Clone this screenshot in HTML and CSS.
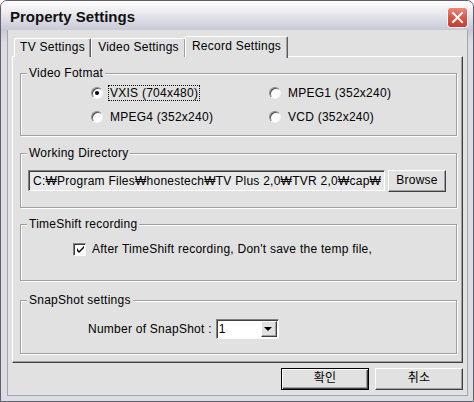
FILE: index.html
```html
<!DOCTYPE html>
<html lang="ko">
<head>
    <meta charset="UTF-8">
    <title>Property Settings</title>
    <link rel="stylesheet" href="styles.css">
</head>
<body>
    <div class="window">
        <!-- Title bar -->
        <div class="titlebar">
            <span class="title">Property Settings</span>
            <div class="close">
                <svg width="21" height="21" viewBox="0 0 21 21">
                    <defs>
                        <linearGradient id="red" x1="0" y1="0" x2="0" y2="1">
                            <stop offset="0" stop-color="#ee8a78"/>
                            <stop offset="0.5" stop-color="#d9574a"/>
                            <stop offset="1" stop-color="#c53b2e"/>
                        </linearGradient>
                    </defs>
                    <rect x="0.5" y="0.5" width="20" height="20" rx="3" fill="url(#red)" stroke="#ffffff"/>
                    <path d="M6 6 L15 15 M15 6 L6 15" stroke="#ffffff" stroke-width="2" stroke-linecap="square"/>
                </svg>
            </div>
        </div>

        <div class="frame">
            <div class="client">
                <!-- Tabs -->
                <div class="tabs">
                    <div class="tab tab-tv">TV Settings</div>
                    <div class="tab tab-video">Video Settings</div>
                    <div class="tab tab-record active">Record Settings</div>
                </div>

                <div class="panel">
                    <fieldset class="group group-video">
                        <legend>Video Fotmat</legend>
                        <div class="radio-grid">
                            <label class="option"><span class="radio checked"></span><span class="focus">VXIS (704x480)</span></label>
                            <label class="option"><span class="radio"></span><span class="text">MPEG1 (352x240)</span></label>
                            <label class="option"><span class="radio"></span><span class="text">MPEG4 (352x240)</span></label>
                            <label class="option"><span class="radio"></span><span class="text">VCD (352x240)</span></label>
                        </div>
                    </fieldset>

                    <fieldset class="group group-dir">
                        <legend>Working Directory</legend>
                        <div class="dir-row">
                            <div class="field">C:₩Program Files₩honestech₩TV Plus 2,0₩TVR 2,0₩cap₩</div>
                            <div class="btn btn-browse">Browse</div>
                        </div>
                    </fieldset>

                    <fieldset class="group group-shift">
                        <legend>TimeShift recording</legend>
                        <label class="check-row">
                            <span class="checkbox">
                                <svg width="7" height="7" viewBox="0 0 7 7">
                                    <path d="M0 2 L0 5 L2 7 L7 2 L7 0 L2 5 Z" fill="#000"/>
                                </svg>
                            </span>
                            <span>After TimeShift recording, Don't save the temp file,</span>
                        </label>
                    </fieldset>

                    <fieldset class="group group-snap">
                        <legend>SnapShot settings</legend>
                        <div class="snap-row">
                            <span>Number of SnapShot :</span>
                            <div class="select">
                                <span class="select-value">1</span>
                                <span class="select-arrow"></span>
                            </div>
                        </div>
                    </fieldset>
                </div>

                <!-- Dialog buttons -->
                <div class="buttons">
                    <div class="btn btn-default">확인</div>
                    <div class="btn">취소</div>
                </div>
            </div>
        </div>
    </div>
</body>
</html>
```

FILE: styles.css
```css
/* Reset */
* {
    margin: 0;
    padding: 0;
    box-sizing: border-box;
}

body {
    font-family: "Liberation Sans", "Noto Sans CJK KR", sans-serif;
    font-size: 12px;
    letter-spacing: 0.25px;
    color: #000;
    background: #ffffff;
}

/* Window frame */
.window {
    width: 474px;
    height: 402px;
    border: 1px solid #5f5f6b;
    border-radius: 7px 7px 0 0;
    overflow: hidden;
    background: #d8d8e0;
    display: flex;
    flex-direction: column;
}

.titlebar {
    height: 29px;
    display: flex;
    align-items: center;
    justify-content: space-between;
    padding: 0 5px 0 9px;
    background: linear-gradient(to bottom, #ffffff 0%, #ededf2 35%, #c8c9d5 100%);
}

.title {
    font-size: 15px;
    font-weight: bold;
    letter-spacing: 0;
    color: #111;
    margin-top: 1px;
}

.close {
    width: 21px;
    height: 21px;
    margin-top: 4px;
}

.close svg {
    display: block;
}

.frame {
    flex: 1;
    padding: 0 5px 5px 6px;
    background: linear-gradient(to bottom, #c8c9d5 0px, #dcdce3 12px);
}

.client {
    height: 100%;
    background: #e1e1e1;
    border: 1px solid #a5a5b0;
    border-top: none;
    padding: 6px 4px 5px 4px;
}

/* Tabs */
.tabs {
    display: flex;
    height: 21px;
    padding-left: 2px;
    position: relative;
    z-index: 1;
}

.tab {
    height: 19px;
    margin-top: 2px;
    border-top: 1px solid #ffffff;
    border-left: 1px solid #ffffff;
    border-right: 1px solid #5a5a5a;
    border-radius: 2px 2px 0 0;
    background: #e1e1e1;
    text-align: center;
    line-height: 17px;
    box-shadow: inset -1px 0 0 #a0a0a0;
}

.tab-tv {
    width: 77px;
}

.tab-video {
    width: 95px;
}

.tab-record {
    width: 103px;
}

.tab.active {
    height: 22px;
    margin-top: 0;
    margin-left: -1px;
    line-height: 18px;
}

/* Tab page */
.panel {
    height: 307px;
    margin-top: -1px;
    border: 1px solid;
    border-color: #ffffff #404040 #404040 #ffffff;
    box-shadow: inset -1px -1px 0 #a0a0a0;
    padding-top: 9px;
}

/* Group boxes */
.group {
    margin: 0 5px 0 7px;
    border: 1px solid #a0a0a0;
    box-shadow: inset 1px 1px 0 #ffffff, 1px 1px 0 #ffffff;
}

.group legend {
    margin-left: 6px;
    padding: 0 2px;
    line-height: 14px;
    background: #e1e1e1;
}

.group-dir {
    margin-top: 10px;
}

.group-shift {
    margin-top: 9px;
}

.group-snap {
    margin-top: 12px;
}

/* Video format radios */
.radio-grid {
    display: grid;
    grid-template-columns: 178px 1fr;
    grid-auto-rows: 24px;
    padding: 1px 0 6px 70px;
}

.option {
    display: flex;
    align-items: center;
}

.radio {
    width: 12px;
    height: 12px;
    border-radius: 50%;
    background: #ffffff;
    border: 1px solid;
    border-color: #8a8a8a #f2f2f2 #f2f2f2 #8a8a8a;
    box-shadow: inset 1px 1px 0 #505050;
    margin-right: 7px;
    display: flex;
    align-items: center;
    justify-content: center;
}

.radio.checked::after {
    content: "";
    width: 4px;
    height: 4px;
    border-radius: 50%;
    background: #000;
}

.focus {
    border: 1px dotted #000;
    padding: 0 1px;
    margin-left: -2px;
    line-height: 14px;
}

/* Working directory */
.dir-row {
    display: flex;
    align-items: flex-start;
    padding: 10px 0 15px 7px;
}

.field {
    width: 357px;
    height: 21px;
    border: 1px solid;
    border-color: #808080 #ffffff #ffffff #808080;
    box-shadow: inset 1px 1px 0 #404040;
    background: #e9e9e9;
    padding: 2px 0 0 4px;
    white-space: nowrap;
    overflow: hidden;
    line-height: 16px;
}

.btn {
    height: 22px;
    border: 1px solid;
    border-color: #ffffff #404040 #404040 #ffffff;
    box-shadow: inset -1px -1px 0 #a0a0a0;
    background: #e1e1e1;
    text-align: center;
    line-height: 19px;
}

.btn-browse {
    width: 58px;
    margin-left: 3px;
}

/* TimeShift */
.check-row {
    display: flex;
    align-items: center;
    height: 16px;
    margin: 10px 0 23px 52px;
}

.checkbox {
    width: 13px;
    height: 13px;
    background: #ffffff;
    border: 1px solid;
    border-color: #808080 #ffffff #ffffff #808080;
    box-shadow: inset 1px 1px 0 #404040;
    margin-right: 6px;
    display: flex;
    align-items: center;
    justify-content: center;
}

.checkbox svg {
    display: block;
    margin: 1px 0 0 1px;
}

/* SnapShot */
.snap-row {
    display: flex;
    align-items: center;
    padding: 12px 0 14px 67px;
}

.select {
    width: 63px;
    height: 20px;
    margin-left: 4px;
    border: 1px solid;
    border-color: #808080 #ffffff #ffffff #808080;
    box-shadow: inset 1px 1px 0 #404040;
    background: #ffffff;
    display: flex;
    align-items: center;
    padding: 1px 1px 1px 2px;
}

.select-value {
    flex: 1;
    line-height: 16px;
}

.select-arrow {
    width: 16px;
    height: 16px;
    border: 1px solid;
    border-color: #ffffff #404040 #404040 #ffffff;
    box-shadow: inset -1px -1px 0 #a0a0a0;
    background: #e1e1e1;
    display: flex;
    align-items: center;
    justify-content: center;
}

.select-arrow::after {
    content: "";
    border-left: 4px solid transparent;
    border-right: 4px solid transparent;
    border-top: 4px solid #000;
    margin: 0 1px 0 0;
}

/* Bottom buttons */
.buttons {
    display: flex;
    justify-content: flex-end;
    gap: 6px;
    margin-top: 5px;
}

.buttons .btn {
    width: 88px;
}

.btn-default {
    border: 1px solid #000;
    box-shadow: inset 1px 1px 0 #ffffff, inset -1px -1px 0 #404040, inset -2px -2px 0 #a0a0a0;
}
```
